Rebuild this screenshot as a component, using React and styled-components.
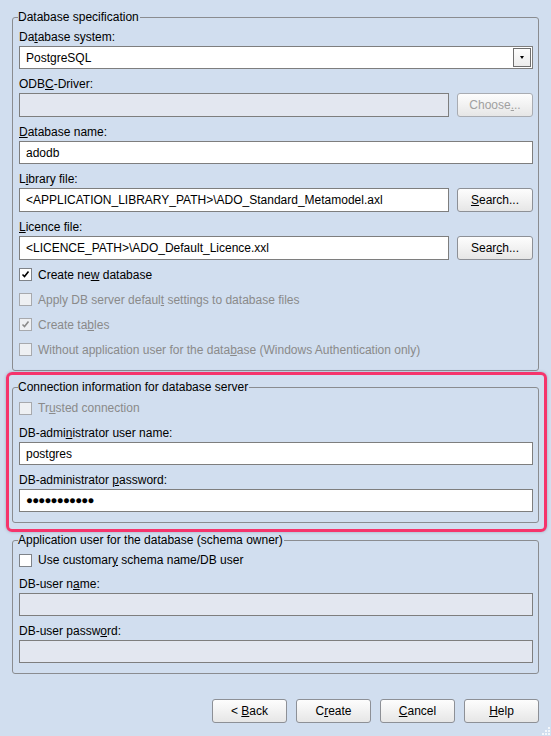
import React from 'react';
import styled, { createGlobalStyle } from 'styled-components';

const GlobalStyle = createGlobalStyle`
    html, body {
        margin: 0;
        padding: 0;
        background: #d1deef;
    }
    body {
        font-family: "Liberation Sans", Arial, sans-serif;
        font-size: 12px;
        color: #000;
    }
`;

const Page = styled.div`
    position: relative;
    width: 551px;
    height: 736px;
    box-sizing: border-box;
    padding: 10px 12px 0 12px;
    display: flex;
    flex-direction: column;
    overflow: hidden;
`;

const Group = styled.fieldset`
    margin: ${p => p.$top || 0}px 0 0 0;
    padding: ${p => p.$padTop || 0}px 5px ${p => p.$padBottom || 8}px 6px;
    border: 1px solid #8a8c90;
    border-radius: 3px;
    min-width: 0;
    display: flex;
    flex-direction: column;
`;

const Legend = styled.legend`
    margin-left: -1px;
    padding: 0 1px 0 0;
    line-height: 14px;
    font-size: 12px;
`;

const Highlight = styled.div`
    position: relative;
    margin-top: 9px;
    &::after {
        content: '';
        position: absolute;
        top: -8px;
        left: -6px;
        right: -8px;
        bottom: -9px;
        border: 3px solid #f5346c;
        border-radius: 6px;
        box-shadow: 0 0 3px rgba(60, 70, 90, 0.35);
        pointer-events: none;
    }
`;

const Field = styled.div`
    margin-top: ${p => p.$gap || 0}px;
    display: flex;
    flex-direction: column;
`;

const Label = styled.div`
    line-height: 14px;
    height: 14px;
    margin-bottom: 2px;
    white-space: nowrap;
`;

const Row = styled.div`
    display: flex;
    align-items: stretch;
    gap: 8px;
`;

const TextBox = styled.div`
    position: relative;
    flex: 1;
    min-height: 23px;
    box-sizing: border-box;
    border: 1px solid #7e7e7e;
    background: ${p => (p.$disabled ? '#e3e7f0' : '#fff')};
    padding: 0 6px;
    display: flex;
    align-items: center;
    white-space: nowrap;
    overflow: hidden;
`;

const Dots = styled.span`
    font-size: 11.5px;
    letter-spacing: -0.8px;
    line-height: 1;
`;

const DropButton = styled.div`
    position: absolute;
    right: 1px;
    top: 1px;
    width: 18px;
    height: 19px;
    box-sizing: border-box;
    border: 1px solid #6e6e6e;
    background: linear-gradient(#fdfdfd, #ececec);
    display: flex;
    align-items: center;
    justify-content: center;
`;

const Arrow = styled.div`
    width: 0;
    height: 0;
    border-left: 2.5px solid transparent;
    border-right: 2.5px solid transparent;
    border-top: 3px solid #000;
`;

const Button = styled.div`
    width: ${p => p.$w || 75}px;
    height: 24px;
    box-sizing: border-box;
    border: 1px solid ${p => (p.$disabled ? '#a9acb2' : '#8d9096')};
    border-radius: 3px;
    background: linear-gradient(#fdfdfd 0%, #f3f3f3 45%, #e6e6e6 100%);
    color: ${p => (p.$disabled ? '#a0a0a0' : '#000')};
    display: flex;
    align-items: center;
    justify-content: center;
    flex-shrink: 0;
    white-space: pre;
`;

const CheckRow = styled.div`
    height: ${p => p.$h || 25}px;
    margin-top: ${p => p.$gap || 0}px;
    display: flex;
    align-items: center;
    gap: 6px;
    color: ${p => (p.$disabled ? '#8a8a8a' : '#000')};
    white-space: nowrap;
`;

const Box = styled.div`
    width: 13px;
    height: 13px;
    box-sizing: border-box;
    border: 1px solid ${p => (p.$disabled ? '#a7a9ad' : '#7f8389')};
    background: ${p => (p.$disabled ? '#eef0f3' : '#fff')};
    display: flex;
    align-items: center;
    justify-content: center;
`;

const Key = styled.span`
    text-decoration: underline;
    text-underline-offset: 1px;
`;

const ButtonBar = styled.div`
    margin-top: 25px;
    display: flex;
    justify-content: flex-end;
    gap: 9px;
`;

const Grip = styled.svg`
    position: absolute;
    right: 1px;
    bottom: 1px;
`;

const Check = ({ disabled, checked }) => (
    <Box $disabled={disabled}>
        {checked && (
            <svg width="9" height="9" viewBox="0 0 9 9">
                <path d="M1.5 4.5 L3.5 6.5 L7.5 1.5" fill="none"
                    stroke={disabled ? '#8a8a8a' : '#000'} strokeWidth="1.6" />
            </svg>
        )}
    </Box>
);

const App = () => {
    return (
        <>
            <GlobalStyle />
            <Page>
                <Group $padTop={6}>
                    <Legend>Database specification</Legend>
                    <Field>
                        <Label>Da<Key>t</Key>abase system:</Label>
                        <Row>
                            <TextBox>
                                PostgreSQL
                                <DropButton><Arrow /></DropButton>
                            </TextBox>
                        </Row>
                    </Field>
                    <Field $gap={8}>
                        <Label>ODB<Key>C</Key>-Driver:</Label>
                        <Row>
                            <TextBox $disabled />
                            <Button $w={76} $disabled><span>Choose<Key>.</Key>..</span></Button>
                        </Row>
                    </Field>
                    <Field $gap={8}>
                        <Label><Key>D</Key>atabase name:</Label>
                        <Row>
                            <TextBox>adodb</TextBox>
                        </Row>
                    </Field>
                    <Field $gap={8}>
                        <Label>L<Key>i</Key>brary file:</Label>
                        <Row>
                            <TextBox>{'<APPLICATION_LIBRARY_PATH>\\ADO_Standard_Metamodel.axl'}</TextBox>
                            <Button $w={76}><span><Key>S</Key>earch...</span></Button>
                        </Row>
                    </Field>
                    <Field $gap={8}>
                        <Label><Key>L</Key>icence file:</Label>
                        <Row>
                            <TextBox>{'<LICENCE_PATH>\\ADO_Default_Licence.xxl'}</TextBox>
                            <Button $w={76}><span>Sear<Key>c</Key>h...</span></Button>
                        </Row>
                    </Field>
                    <CheckRow $gap={2}>
                        <Check checked />
                        <span>Create ne<Key>w</Key> database</span>
                    </CheckRow>
                    <CheckRow $disabled>
                        <Check disabled />
                        <span>Apply DB server defaul<Key>t</Key> settings to database files</span>
                    </CheckRow>
                    <CheckRow $disabled>
                        <Check disabled checked />
                        <span>Create ta<Key>b</Key>les</span>
                    </CheckRow>
                    <CheckRow $disabled>
                        <Check disabled />
                        <span>Without application user for the data<Key>b</Key>ase (Windows Authentication only)</span>
                    </CheckRow>
                </Group>

                <Highlight>
                    <Group $padTop={2} $padBottom={10}>
                        <Legend>Connection information for database server</Legend>
                        <CheckRow $h={24} $disabled>
                            <Check disabled />
                            <span>Tr<Key>u</Key>sted connection</span>
                        </CheckRow>
                        <Field $gap={6}>
                            <Label>DB-admi<Key>n</Key>istrator user name:</Label>
                            <Row>
                                <TextBox>postgres</TextBox>
                            </Row>
                        </Field>
                        <Field $gap={8}>
                            <Label>DB-administrator <Key>p</Key>assword:</Label>
                            <Row>
                                <TextBox><Dots>●●●●●●●●●●●</Dots></TextBox>
                            </Row>
                        </Field>
                    </Group>
                </Highlight>

                <Group $top={10} $padTop={1} $padBottom={10}>
                    <Legend>Application user for the database (schema owner)</Legend>
                    <CheckRow $h={24}>
                        <Check />
                        <span>Use customar<Key>y</Key> schema name/DB user</span>
                    </CheckRow>
                    <Field $gap={5}>
                        <Label>DB-user n<Key>a</Key>me:</Label>
                        <Row>
                            <TextBox $disabled />
                        </Row>
                    </Field>
                    <Field $gap={8}>
                        <Label>DB-user passw<Key>o</Key>rd:</Label>
                        <Row>
                            <TextBox $disabled />
                        </Row>
                    </Field>
                </Group>

                <ButtonBar>
                    <Button><span>{'< '}<Key>B</Key>ack</span></Button>
                    <Button><span>C<Key>r</Key>eate</span></Button>
                    <Button><span><Key>C</Key>ancel</span></Button>
                    <Button><span><Key>H</Key>elp</span></Button>
                </ButtonBar>

                <Grip width="10" height="10" viewBox="0 0 10 10">
                    {[[8, 2], [5, 5], [8, 5], [2, 8], [5, 8], [8, 8]].map(([x, y]) => (
                        <rect key={`${x}-${y}`} x={x} y={y} width="2" height="2" fill="#f4f7fb" />
                    ))}
                </Grip>
            </Page>
        </>
    );
};

export default App;
